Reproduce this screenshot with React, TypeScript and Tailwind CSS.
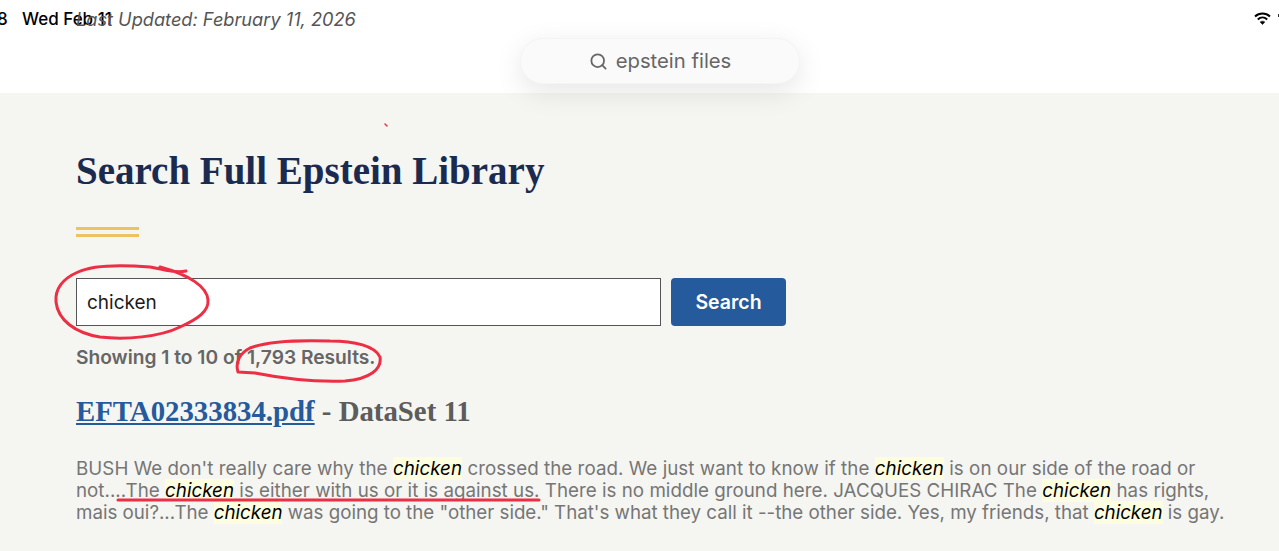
import { Search } from 'lucide-react';

const sans = "font-['Inter','Liberation_Sans',sans-serif]";
const serif = "font-['Liberation_Serif','Noto_Serif',serif]";

function Hit() {
  return <em className="bg-[#fdfde0] text-black">chicken</em>;
}

function StatusBar() {
  return (
    <div className="absolute inset-x-0 top-0 h-10 overflow-hidden">
      <span className="absolute left-[-3px] top-[9px] text-[17px] leading-[20px] font-medium text-black">8</span>
      <span className="absolute left-[22px] top-[9px] text-[17px] leading-[20px] font-medium text-black">Wed Feb 11</span>
      <span className="absolute left-[76px] top-[8px] text-[18.2px] leading-[22px] italic text-[#555]">Last Updated: February 11, 2026</span>
      <svg className="absolute left-[1254px] top-[12px]" width="17" height="13" viewBox="0 0 17 13" fill="none" stroke="#000" strokeWidth="2">
        <path d="M1 4.5c4.2-3.9 10.8-3.9 15 0" />
        <path d="M3.8 7.4c2.7-2.4 6.7-2.4 9.4 0" />
        <path d="M8.5 12.5l-2.4-2.6c1.4-1 3.4-1 4.8 0z" fill="#000" strokeWidth="0.5" />
      </svg>
      <div className="absolute left-[1278px] top-[14px] h-[3px] w-px bg-[#333]" />
    </div>
  );
}

// hand-drawn red markup on top of the screenshot
function Annotations() {
  return (
    <svg className="pointer-events-none absolute left-0 top-0" width="1279" height="551" viewBox="0 0 1279 551" fill="none" stroke="#ec2f45" strokeWidth="3" strokeLinecap="round">
      <path d="M186 271C176 273 165 270 150 267C125 265 95 264 78 272C62 279 55 290 56 302C58 320 75 333 100 337C125 340 160 337 180 327C198 319 209 311 208 300C207 287 190 275 160 267" />
      <path d="M238 372C235 362 240 353 250 348C268 341 300 340 330 341C355 341 375 346 380 357C382 369 370 379 345 381C315 382 280 378 255 373L238 372" />
      <path d="M118 500C200 500 280 500 360 500C420 500 480 500 539 500" />
      <path d="M385 124l2 2" strokeWidth="1.5" />
    </svg>
  );
}

export default function App() {
  return (
    <div className={`relative h-[551px] w-[1279px] overflow-hidden bg-[#f5f5f1] ${sans}`}>
      <header className="h-[93px] bg-white" />
      <StatusBar />
      <div className="absolute left-[520px] top-[38px] flex h-[46px] w-[280px] items-center justify-center gap-2 rounded-full border border-[#f5f5f5] bg-[#fafafa] text-[20.3px] text-[#666] shadow-[0_8px_28px_rgba(0,0,0,0.1)]">
        <Search size={19} strokeWidth={2.25} />
        <span>epstein files</span>
      </div>

      <main className="pl-[76px] pt-[52px]">
        <h1 className={`text-[39px] leading-[52px] font-bold text-[#1b2b50] ${serif}`}>Search Full Epstein Library</h1>
        <div className="mt-[30px] flex w-[63px] flex-col gap-[4px]">
          <div className="h-[3px] bg-[#edc35f]" />
          <div className="h-[3px] bg-[#edc35f]" />
        </div>
        <form className="mt-[41px] flex gap-[10px]">
          <div className="flex h-[48px] w-[585px] items-center border border-[#555] bg-white px-[10px] pt-[2px] text-[19px] text-[#1b1b1b]">chicken</div>
          <button type="button" className="h-[48px] w-[115px] rounded-[4px] bg-[#255a9c] pt-[2px] text-[19.5px] font-semibold text-white">Search</button>
        </form>
        <p className="mt-[19px] text-[19.2px] leading-[24px] font-semibold text-[#666]">Showing 1 to 10 of 1,793 Results.</p>
        <h2 className={`mt-[26px] text-[28.8px] leading-[32px] font-bold text-[#5c5c5c] ${serif}`}>
          <a href="#" className="text-[#255a9c] underline">EFTA02333834.pdf</a> - DataSet 11
        </h2>
        <p className="mt-[31px] w-[1170px] text-[18.75px] leading-[22px] text-[#767676]">
          <span className="tracking-[0.05px]">BUSH We don't really care why the <Hit /> crossed the road. We just want to know if the <Hit /> is on our side of the road or</span><br />
          <span className="tracking-[0.02px]">not....The <Hit /> is either with us or it is against us. There is no middle ground here. JACQUES CHIRAC The <Hit /> has rights,</span><br />
          <span className="tracking-[-0.02px]">mais oui?...The <Hit /> was going to the "other side." That's what they call it --the other side. Yes, my friends, that <Hit /> is gay.</span>
        </p>
      </main>
      <Annotations />
    </div>
  );
}
